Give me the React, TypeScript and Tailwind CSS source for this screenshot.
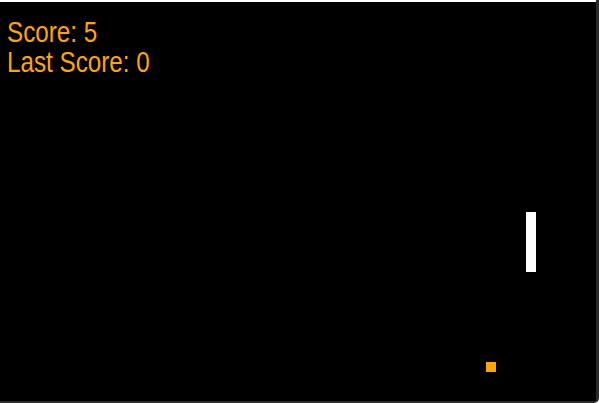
import React from 'react'

export default function App() {
  const score = 5
  const lastScore = 0

  return (
    <div className="h-[403px] w-[599px] overflow-hidden rounded-br-[5px] bg-[#2b2b2b] pb-[2px] pr-[3px]">
      <div className="flex h-full flex-col">
        <div className="h-[2px] bg-white" />
        <div className="relative flex-1 bg-black px-[7px] pt-[15px]">
          {/* narrow score text */}
          <div
            className="origin-left scale-x-[0.835] whitespace-nowrap text-[29px] leading-[30px] text-[#ffa500]"
            style={{ fontFamily: '"Liberation Sans", Arial, sans-serif' }}
          >
            <div>Score: {score}</div>
            <div>Last Score: {lastScore}</div>
          </div>

          {/* paddle */}
          <div className="absolute left-[526px] top-[210px] h-[60px] w-[10px] bg-white" />
          {/* ball */}
          <div className="absolute left-[486px] top-[360px] h-[10px] w-[10px] bg-[#ffa500]" />
        </div>
      </div>
    </div>
  )
}
